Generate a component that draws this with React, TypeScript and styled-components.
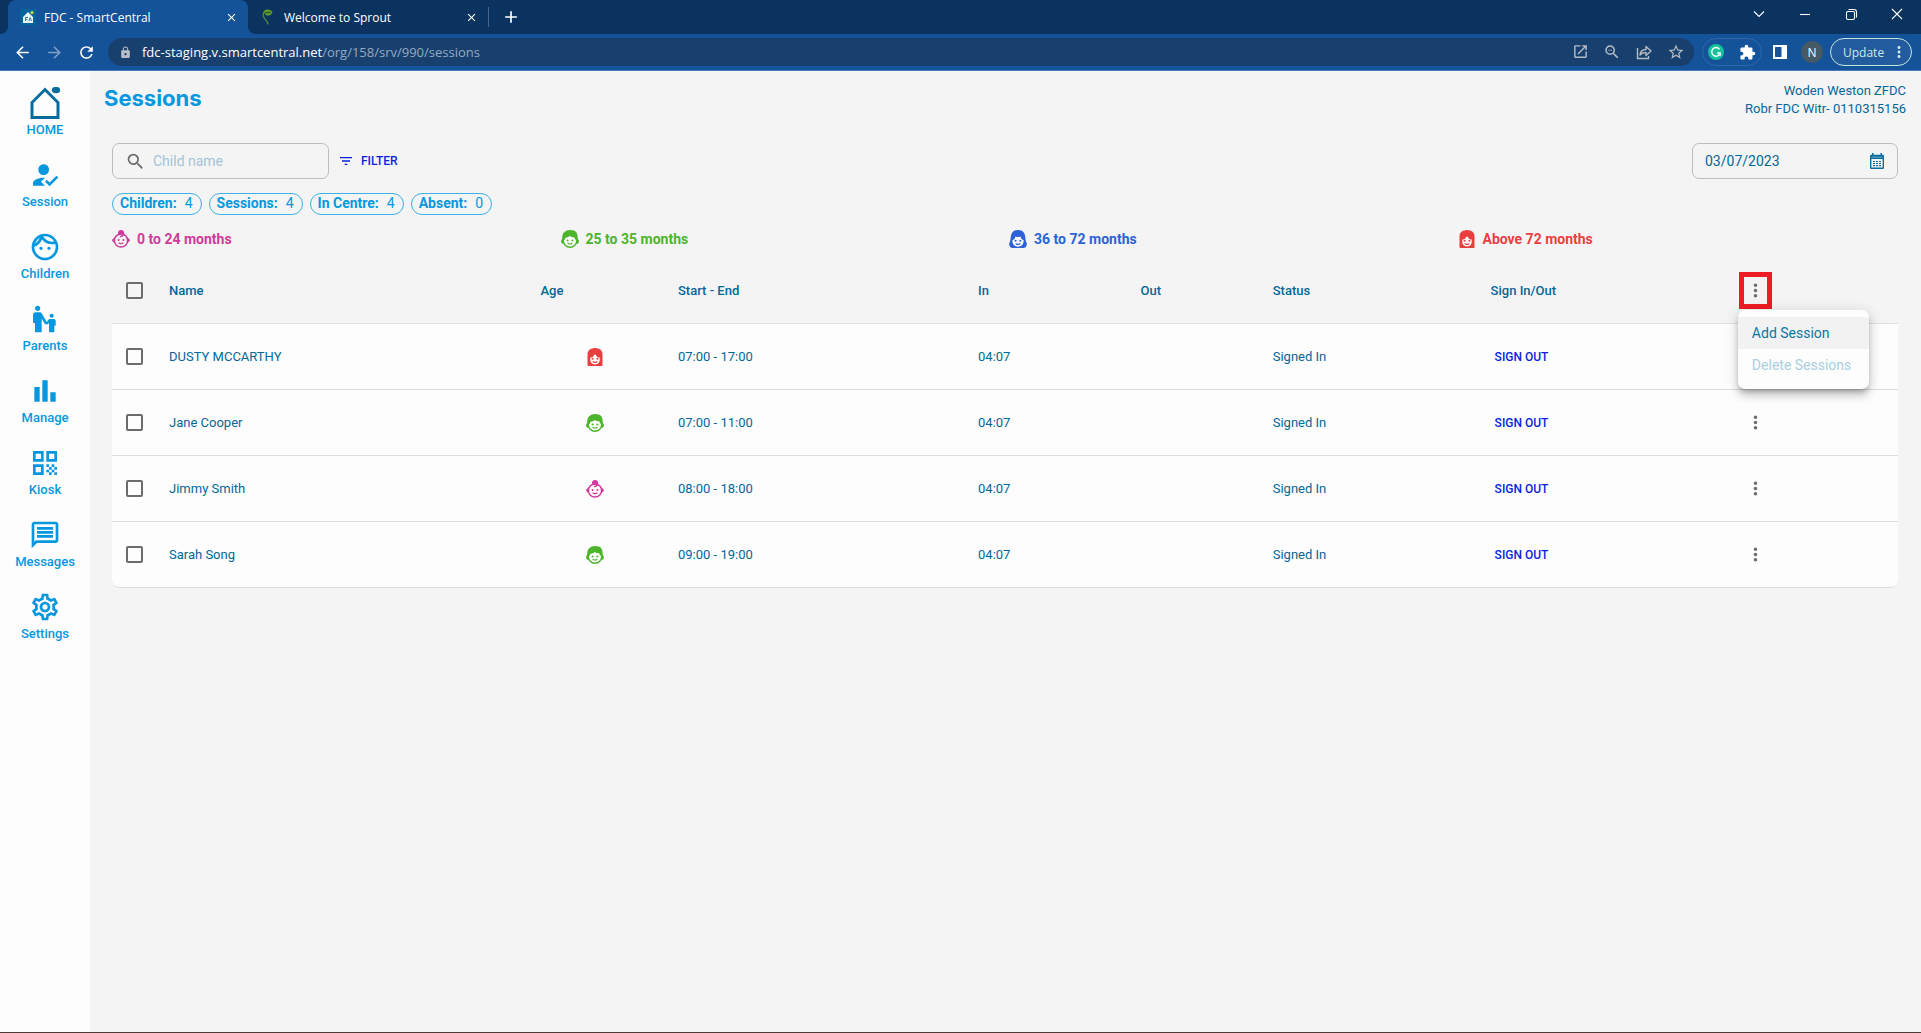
import React from "react";
import styled, { createGlobalStyle } from "styled-components";
import {
  MdAdd,
  MdArrowBack,
  MdArrowForward,
  MdBarChart,
  MdClose,
  MdEscalatorWarning,
  MdExtension,
  MdFilterList,
  MdHowToReg,
  MdLock,
  MdMoreVert,
  MdOpenInNew,
  MdOutlineFace,
  MdOutlineMessage,
  MdOutlineSettings,
  MdOutlineZoomOut,
  MdQrCode,
  MdRefresh,
  MdSearch,
  MdStarBorder,
} from "react-icons/md";

const chromeFont = `"Open Sans", "Noto Sans", sans-serif`;
const appFont = `Roboto, "Liberation Sans", sans-serif`;

const color = {
  strip: "#0b3360",
  toolbar: "#14529a",
  field: "#18406f",
  page: "#f4f4f4",
  surface: "#fdfdfd",
  brand: "#0598df",
  text: "#03679a",
  action: "#0a1fe0",
  line: "#dedede",
  outline: "#bdbdbd",
  grey: "#6c6c6c",
};

const GlobalStyle = createGlobalStyle`
  *, *::before, *::after { box-sizing: border-box; }
  body { margin: 0; font-family: ${appFont}; color: ${color.text}; background: ${color.page}; }
  button, input { font: inherit; color: inherit; }
  button { padding: 0; border: 0; background: none; cursor: pointer; }
  svg { display: block; flex: none; }
`;

const Window = styled.div`
  display: flex;
  flex-direction: column;
  min-height: 100vh;
  border-bottom: 1px solid #4d3a36;
`;

/* ---------- browser chrome ---------- */

const TabStrip = styled.div`
  display: flex;
  height: 34px;
  padding: 0 9px 0 8px;
  background: ${color.strip};
  color: #fff;
  font-family: ${chromeFont};
  font-size: 12px;
`;

const Tab = styled.div<{ $active?: boolean }>`
  position: relative;
  display: flex;
  align-items: center;
  gap: 8px;
  width: 240px;
  padding: 0 10px 0 12px;
  border-radius: 8px 8px 0 0;
  background: ${(p) => (p.$active ? color.toolbar : "transparent")};

  &::before,
  &::after {
    content: "";
    position: absolute;
    bottom: 0;
    width: 8px;
    height: 8px;
    display: ${(p) => (p.$active ? "block" : "none")};
  }
  &::before {
    left: -8px;
    background: radial-gradient(circle at 0 0, transparent 8px, ${color.toolbar} 8px);
  }
  &::after {
    right: -8px;
    background: radial-gradient(circle at 100% 0, transparent 8px, ${color.toolbar} 8px);
  }
`;

const TabTitle = styled.span`
  flex: 1;
  white-space: nowrap;
`;

const TabDivider = styled.div`
  width: 1px;
  height: 20px;
  margin: 7px 12px 0 0;
  background: #45658b;
`;

const StripButton = styled.button`
  display: flex;
  align-items: center;
  height: 34px;
`;

const WindowControls = styled.div`
  display: flex;
  align-items: center;
  height: 28px;
  gap: 30px;
  margin-left: auto;
  padding-right: 7px;
`;

const Toolbar = styled.div`
  display: flex;
  align-items: center;
  height: 37px;
  padding: 0 9px 0 13px;
  background: ${color.toolbar};
  border-bottom: 1px solid #4679b5;
  color: #fff;
  font-family: ${chromeFont};
`;

const NavButtons = styled.div`
  display: flex;
  gap: 13px;
  margin-right: 12px;
`;

const ChromeButton = styled.button<{ $dim?: boolean }>`
  display: flex;
  opacity: ${(p) => (p.$dim ? 0.45 : 1)};
`;

const AddressBar = styled.div`
  display: flex;
  align-items: center;
  flex: 1;
  height: 28px;
  padding: 0 9px 0 11px;
  border-radius: 14px;
  background: ${color.field};
  color: #b6bcc3;
  font-size: 13px;
`;

const Address = styled.span`
  flex: 1;
  margin-left: 10px;
  color: #93a9c3;
`;

const Host = styled.span`
  color: #fff;
`;

const AddressActions = styled.div`
  display: flex;
  gap: 14px;
`;

const Extensions = styled.div`
  display: flex;
  align-items: center;
  justify-content: space-between;
  width: 60px;
  height: 28px;
  margin: 0 11px 0 8px;
  padding: 0 5px;
  border: 1px solid #2f68aa;
  border-radius: 14px;
`;

const Avatar = styled.button`
  width: 22px;
  height: 22px;
  margin: 0 7px 0 14px;
  border-radius: 50%;
  background: #455a64;
  font-size: 12px;
`;

const UpdateButton = styled.button`
  display: flex;
  align-items: center;
  justify-content: space-between;
  width: 82px;
  height: 28px;
  padding: 0 3px 0 12px;
  border: 1px solid #c3e6dc;
  border-radius: 14px;
  background: #225c9e;
  color: #cfe8e0;
  font-size: 12px;
`;

/* ---------- application ---------- */

const Body = styled.div`
  display: flex;
  flex: 1;
`;

const Sidebar = styled.nav`
  flex: none;
  width: 90px;
  padding-top: 8px;
  background: ${color.surface};
`;

const NavItem = styled.a`
  display: flex;
  flex-direction: column;
  align-items: center;
  height: 72px;
  padding-top: 8px;
  color: ${color.brand};
  font-size: 13px;
  font-weight: 500;
  line-height: 22px;
  text-decoration: none;
`;

const Main = styled.main`
  flex: 1;
  min-width: 0;
  padding: 10px 15px 0 14px;
`;

const PageHeader = styled.header`
  display: flex;
  justify-content: space-between;
`;

const Title = styled.h1`
  margin: 0;
  color: ${color.brand};
  font-family: Inter, sans-serif;
  font-size: 22px;
  font-weight: 700;
  line-height: 34px;
`;

const Account = styled.div`
  font-size: 13px;
  line-height: 18px;
  padding-top: 1px;
  text-align: right;
`;

const Content = styled.div`
  padding: 25px 8px 0;
`;

const Controls = styled.div`
  display: flex;
  align-items: center;
`;

const Field = styled.label<{ $width: number }>`
  display: flex;
  align-items: center;
  width: ${(p) => p.$width}px;
  height: 36px;
  padding: 0 12px;
  gap: 7px;
  border: 1px solid ${color.outline};
  border-radius: 7px;
  font-size: 14px;
`;

const FieldInput = styled.input`
  flex: 1;
  min-width: 0;
  padding: 0;
  border: 0;
  outline: 0;
  background: none;
  &::placeholder {
    color: #a2c4d6;
    opacity: 1;
  }
`;

const FilterButton = styled.button`
  display: flex;
  align-items: center;
  gap: 7px;
  margin: 0 auto 0 9px;
  color: ${color.action};
  font-size: 12px;
  font-weight: 500;
`;

const Chips = styled.div`
  display: flex;
  gap: 7px;
  margin-top: 14px;
`;

const Chip = styled.span`
  display: flex;
  gap: 8px;
  height: 22px;
  padding: 0 8px 0 7px;
  border: 1px solid #3db0e5;
  border-radius: 11px;
  color: ${color.brand};
  font-size: 14px;
  line-height: 19px;
`;

const Legend = styled.div`
  display: grid;
  grid-template-columns: repeat(4, 1fr);
  gap: 8px;
  margin: 14px 0 8px;
`;

const LegendItem = styled.div<{ $color: string }>`
  display: flex;
  align-items: center;
  gap: 7px;
  color: ${(p) => p.$color};
  font-size: 14px;
  font-weight: 700;
  line-height: 20px;
`;

const Table = styled.table`
  width: 100%;
  table-layout: fixed;
  border-collapse: separate;
  border-spacing: 0;
  font-size: 13px;
`;

const Col = styled.col<{ $width?: string }>`
  width: ${(p) => p.$width ?? "auto"};
`;

const HeadCell = styled.th`
  height: 67px;
  padding: 0 13px;
  border-bottom: 1px solid ${color.line};
  font-weight: 500;
  text-align: left;
`;

const Row = styled.tr`
  background: ${color.surface};
  &:last-child td:first-child {
    border-bottom-left-radius: 7px;
  }
  &:last-child td:last-child {
    border-bottom-right-radius: 7px;
  }
`;

const Cell = styled.td`
  height: 66px;
  padding: 0 13px;
  border-bottom: 1px solid ${color.line};
`;

const AgeCell = styled(Cell)`
  padding-right: 16px;
  svg {
    margin: 0 auto;
  }
`;

const Check = styled.input`
  appearance: none;
  display: block;
  width: 17px;
  height: 17px;
  margin: 0 0 0 1px;
  border: 2px solid ${color.grey};
  border-radius: 2px;
`;

const SignOut = styled.button`
  padding: 0 4px;
  color: ${color.action};
  font-weight: 500;
  font-size: 12px;
`;

const MenuAnchor = styled.div`
  position: relative;
  width: 33px;
`;

const MoreButton = styled.button<{ $marked?: boolean }>`
  display: flex;
  align-items: center;
  justify-content: center;
  width: 33px;
  height: 37px;
  border: 5px solid ${(p) => (p.$marked ? "#ee1c24" : "transparent")};
  color: ${color.grey};
`;

const Menu = styled.div`
  position: absolute;
  z-index: 1;
  top: 38px;
  left: -1px;
  width: 131px;
  padding: 7px 0 8px;
  border-radius: 7px;
  background: ${color.surface};
  box-shadow: 0 4px 5px -2px rgba(0, 0, 0, 0.25), 0 7px 9px rgba(0, 0, 0, 0.14),
    0 2px 14px 1px rgba(0, 0, 0, 0.12);
`;

const MenuItem = styled.button<{ $active?: boolean }>`
  display: block;
  width: 100%;
  height: 32px;
  padding: 0 14px;
  background: ${(p) => (p.$active ? "#f2f2f2" : "none")};
  color: ${(p) => (p.$active ? "#0b76a4" : "#a9cfe0")};
  font-size: 14px;
  font-weight: 400;
  text-align: left;
  white-space: nowrap;
`;

/* ---------- drawings ---------- */

type Age = "baby" | "boy" | "girl" | "teen";

const ageColor: Record<Age, string> = {
  baby: "#d03a9c",
  boy: "#4cb52b",
  girl: "#2c62d6",
  teen: "#e93f3f",
};

const Features = ({ y, fill }: { y: number; fill: string }) => (
  <>
    <circle cx="8.8" cy={y} r="1.4" fill={fill} />
    <circle cx="15.2" cy={y} r="1.4" fill={fill} />
    <path d={`M8.8 ${y + 3.6}q3.2 2.2 6.4 0`} fill="none" stroke={fill} strokeWidth="1.5" />
  </>
);

const AgeIcon = ({ age }: { age: Age }) => {
  const c = ageColor[age];
  return (
    <svg width="18" height="18" viewBox="0 0 24 24" aria-label={age} role="img">
      {age === "baby" && (
        <>
          <circle cx="12" cy="14" r="8.8" fill="none" stroke={c} strokeWidth="2" />
          <path d="M3.8 10Q0 12 0 13.500t3.800 4zM20.200 10Q24 12 24 13.500t-3.800 4z" fill={c} />
          <path d="M8 5.500Q7.500 0 12 0t4.400 5.500Q15.500 9.500 10.500 9.500V8Q13.500 7.500 13.500 5.500z" fill={c} />
          <Features y={13.4} fill={c} />
        </>
      )}
      {age === "boy" && (
        <>
          <circle cx="12" cy="14" r="9" fill="#fdfdfd" stroke={c} strokeWidth="2" />
          <path d="M3 11.500Q0 12 0 15t4 4zM21 11.500q3 .5 3 3.500t-4 4z" fill={c} />
          <path d="M1.600 13Q1 5 5 2.400 7 0 12 0q6 0 8.400 3Q23 6.500 22.400 13L19 12.600 17.600 9.500Q14 10 12 8 8.500 10.500 6 10.200L5 13z" fill={c} />
          <Features y={14} fill={c} />
        </>
      )}
      {age === "girl" && (
        <>
          <path d="M12 0Q4.500 0 2.600 7 2.400 14 0 19q.4 3.600 4 5h16q3.600-1.400 4-5-2.400-5-2.600-12Q19.500 0 12 0z" fill={c} />
          <path d="M4.600 13.500Q8 12.800 8.800 8.600 12 10 15.200 8.600q.8 4.200 4.200 4.900Q20 21.600 12 22.200 4 21.600 4.600 13.500z" fill="#fdfdfd" />
          <Features y={14.4} fill={c} />
        </>
      )}
      {age === "teen" && (
        <>
          <path d="M2 23V9Q2 0 12 0t10 9v14q0 1-1 1H3q-1 0-1-1z" fill={c} />
          <path d="M5.600 13Q10 12.600 11 9h2q1 3.600 5.400 4Q19 21.400 12 22 5 21.400 5.600 13z" fill="#fdfdfd" />
          <Features y={14.4} fill={c} />
        </>
      )}
    </svg>
  );
};

const HomeIcon = () => (
  <svg width="32" height="32" viewBox="0 0 32 32">
    <path d="M3 30.500V15.500L16 2.500 29 15.500v15z" fill="none" stroke="#066c9d" strokeWidth="3" />
    <ellipse cx="27" cy="3" rx="4.200" ry="3.200" fill="#066c9d" />
  </svg>
);

const HouseFavicon = () => (
  <svg width="16" height="16" viewBox="0 0 16 16">
    <rect width="16" height="16" fill="#04659a" />
    <path d="M3 14V8l5-5 5 5v6z" fill="#e8f3f6" />
    <path d="M5.500 12V8.500H8M5.500 10.300h2M9 12l1.200-3.500L11.500 12" fill="none" stroke="#3c7f9c" />
    <circle cx="12" cy="3.500" r="1.500" fill="#d4dc2a" />
  </svg>
);

const SproutFavicon = () => (
  <svg width="16" height="16" viewBox="0 0 16 16">
    <path d="M3 4Q4 0 8 .5t4.500 3Q11 7 8 6.500 5 7 5 4.500" fill="#5f9a2d" />
    <path d="M4 3Q2 7 5 10t3 5.500" fill="none" stroke="#4d8a35" strokeWidth="1.300" />
    <path d="M5 4q3-1.500 6 0" fill="none" stroke="#24502c" />
  </svg>
);

const ShareIcon = () => (
  <svg width="18" height="18" viewBox="0 0 18 18" fill="none" stroke="currentColor" strokeWidth="1.400">
    <path d="M2.500 5v10.500h11V13" />
    <path d="M5 12Q5.500 6.500 11 6.500V3.500L16 8l-5 4.500V9.500Q7 9.500 5 12z" strokeLinejoin="round" />
  </svg>
);

const GrammarlyIcon = () => (
  <svg width="16" height="16" viewBox="0 0 16 16">
    <circle cx="8" cy="8" r="8" fill="#15c39a" />
    <path d="M11.500 5.300A4.300 4.300 0 1 0 12.200 9H9M12.200 8.500V11.800" fill="none" stroke="#fff" strokeWidth="1.400" />
  </svg>
);

const SidePanelIcon = () => (
  <svg width="14" height="14" viewBox="0 0 14 14">
    <path d="M0 0h14v14H0zM2 2v10h6.500V2z" fill="#fff" fillRule="evenodd" />
  </svg>
);

const CalendarIcon = () => (
  <svg width="16" height="16" viewBox="0 0 16 16">
    <path
      d="M1 3q0-1.200 1.200-1.200H3V0h1.500v1.800h7V0H13v1.800h.8Q15 1.800 15 3v11.800q0 1.200-1.200 1.200H2.200Q1 16 1 14.800zM2.400 6v8.600h11.200V6z"
      fill="#0a6f9f"
      fillRule="evenodd"
    />
    <path d="M4 8.500h2M7 8.500h2M10 8.500h2M4 10.500h2M7 10.500h2M10 10.500h2M4 12.700h2M7 12.700h2M10 12.700h2" stroke="#0a6f9f" strokeWidth="1.200" />
    <path d="M2.400 4.200h11.200" stroke="#7fb4cc" strokeWidth=".8" />
  </svg>
);

const WindowIcon = ({ kind }: { kind: "chevron" | "min" | "restore" | "close" }) => (
  <svg width="16" height="16" viewBox="0 0 16 16" fill="none" stroke="#fff" strokeWidth="1.100">
    {kind === "chevron" && <path d="M3 5.500l5 5 5-5" />}
    {kind === "min" && <path d="M3 8.500h10" />}
    {kind === "restore" && (
      <>
        <rect x="3.500" y="5.500" width="8" height="8" rx="1.500" />
        <path d="M5.500 3.500h5.500Q13.500 3.500 13.500 6v5.500" />
      </>
    )}
    {kind === "close" && <path d="M3 3l10 10M13 3L3 13" />}
  </svg>
);

/* ---------- data ---------- */

const navItems = [
  { label: "HOME", icon: <HomeIcon /> },
  { label: "Session", icon: <MdHowToReg size={32} /> },
  { label: "Children", icon: <MdOutlineFace size={32} /> },
  { label: "Parents", icon: <MdEscalatorWarning size={32} /> },
  { label: "Manage", icon: <MdBarChart size={32} /> },
  { label: "Kiosk", icon: <MdQrCode size={32} /> },
  { label: "Messages", icon: <MdOutlineMessage size={32} /> },
  { label: "Settings", icon: <MdOutlineSettings size={32} /> },
];

const counts = [
  ["Children:", 4],
  ["Sessions:", 4],
  ["In Centre:", 4],
  ["Absent:", 0],
];

const legend: { age: Age; label: string }[] = [
  { age: "baby", label: "0 to 24 months" },
  { age: "boy", label: "25 to 35 months" },
  { age: "girl", label: "36 to 72 months" },
  { age: "teen", label: "Above 72 months" },
];

const sessions: { name: string; age: Age; time: string }[] = [
  { name: "DUSTY MCCARTHY", age: "teen", time: "07:00 - 17:00" },
  { name: "Jane Cooper", age: "boy", time: "07:00 - 11:00" },
  { name: "Jimmy Smith", age: "baby", time: "08:00 - 18:00" },
  { name: "Sarah Song", age: "boy", time: "09:00 - 19:00" },
];

const headings = ["Name", "Age", "Start - End", "In", "Out", "Status", "Sign In/Out"];

const BrowserChrome = () => (
  <>
    <TabStrip>
      <Tab $active>
        <HouseFavicon />
        <TabTitle>FDC - SmartCentral</TabTitle>
        <ChromeButton aria-label="Close tab"><MdClose size={13} /></ChromeButton>
      </Tab>
      <Tab>
        <SproutFavicon />
        <TabTitle>Welcome to Sprout</TabTitle>
        <ChromeButton aria-label="Close tab"><MdClose size={13} /></ChromeButton>
      </Tab>
      <TabDivider />
      <StripButton aria-label="New tab"><MdAdd size={20} /></StripButton>
      <WindowControls>
        <ChromeButton aria-label="Search tabs"><WindowIcon kind="chevron" /></ChromeButton>
        <ChromeButton aria-label="Minimize"><WindowIcon kind="min" /></ChromeButton>
        <ChromeButton aria-label="Restore"><WindowIcon kind="restore" /></ChromeButton>
        <ChromeButton aria-label="Close"><WindowIcon kind="close" /></ChromeButton>
      </WindowControls>
    </TabStrip>
    <Toolbar>
      <NavButtons>
        <ChromeButton aria-label="Back"><MdArrowBack size={19} /></ChromeButton>
        <ChromeButton aria-label="Forward" $dim><MdArrowForward size={19} /></ChromeButton>
        <ChromeButton aria-label="Reload"><MdRefresh size={19} /></ChromeButton>
      </NavButtons>
      <AddressBar>
        <MdLock size={13} />
        <Address><Host>fdc-staging.v.smartcentral.net</Host>/org/158/srv/990/sessions</Address>
        <AddressActions>
          <ChromeButton aria-label="Open in app"><MdOpenInNew size={17} /></ChromeButton>
          <ChromeButton aria-label="Zoom"><MdOutlineZoomOut size={18} /></ChromeButton>
          <ChromeButton aria-label="Share"><ShareIcon /></ChromeButton>
          <ChromeButton aria-label="Bookmark"><MdStarBorder size={18} /></ChromeButton>
        </AddressActions>
      </AddressBar>
      <Extensions>
        <ChromeButton aria-label="Grammarly"><GrammarlyIcon /></ChromeButton>
        <ChromeButton aria-label="Extensions"><MdExtension size={17} /></ChromeButton>
      </Extensions>
      <ChromeButton aria-label="Side panel"><SidePanelIcon /></ChromeButton>
      <Avatar>N</Avatar>
      <UpdateButton>
        Update
        <MdMoreVert size={18} />
      </UpdateButton>
    </Toolbar>
  </>
);

const SessionTable = () => (
  <Table>
    <colgroup>
      <Col $width="44px" />
      <Col $width="20.8%" />
      <Col $width="7.7%" />
      <Col $width="16.8%" />
      <Col $width="9.1%" />
      <Col $width="7.4%" />
      <Col $width="12.2%" />
      <Col $width="13.9%" />
      <Col />
    </colgroup>
    <thead>
      <tr>
        <HeadCell><Check type="checkbox" aria-label="Select all sessions" /></HeadCell>
        {headings.map((h) => <HeadCell key={h}>{h}</HeadCell>)}
        <HeadCell>
          <MenuAnchor>
            <MoreButton $marked aria-label="Session actions"><MdMoreVert size={21} /></MoreButton>
            <Menu role="menu">
              <MenuItem role="menuitem" $active>Add Session</MenuItem>
              <MenuItem role="menuitem" disabled>Delete Sessions</MenuItem>
            </Menu>
          </MenuAnchor>
        </HeadCell>
      </tr>
    </thead>
    <tbody>
      {sessions.map((s) => (
        <Row key={s.name}>
          <Cell><Check type="checkbox" aria-label={`Select ${s.name}`} /></Cell>
          <Cell>{s.name}</Cell>
          <AgeCell><AgeIcon age={s.age} /></AgeCell>
          <Cell>{s.time}</Cell>
          <Cell>04:07</Cell>
          <Cell />
          <Cell>Signed In</Cell>
          <Cell><SignOut>SIGN OUT</SignOut></Cell>
          <Cell><MoreButton aria-label={`Actions for ${s.name}`}><MdMoreVert size={21} /></MoreButton></Cell>
        </Row>
      ))}
    </tbody>
  </Table>
);

export default function App() {
  return (
    <Window>
      <GlobalStyle />
      <BrowserChrome />
      <Body>
        <Sidebar>
          {navItems.map((n) => (
            <NavItem key={n.label} href="#">
              {n.icon}
              {n.label}
            </NavItem>
          ))}
        </Sidebar>
        <Main>
          <PageHeader>
            <Title>Sessions</Title>
            <Account>
              <div>Woden Weston ZFDC</div>
              <div>Robr FDC Witr- 0110315156</div>
            </Account>
          </PageHeader>
          <Content>
            <Controls>
              <Field $width={217}>
                <MdSearch size={21} color={color.grey} />
                <FieldInput placeholder="Child name" aria-label="Child name" />
              </Field>
              <FilterButton><MdFilterList size={16} />FILTER</FilterButton>
              <Field $width={206}>
                <FieldInput defaultValue="03/07/2023" aria-label="Session date" />
                <ChromeButton aria-label="Open calendar"><CalendarIcon /></ChromeButton>
              </Field>
            </Controls>
            <Chips>
              {counts.map(([label, n]) => (
                <Chip key={label}><b>{label}</b>{n}</Chip>
              ))}
            </Chips>
            <Legend>
              {legend.map((l) => (
                <LegendItem key={l.age} $color={ageColor[l.age]}>
                  <AgeIcon age={l.age} />
                  {l.label}
                </LegendItem>
              ))}
            </Legend>
            <SessionTable />
          </Content>
        </Main>
      </Body>
    </Window>
  );
}
